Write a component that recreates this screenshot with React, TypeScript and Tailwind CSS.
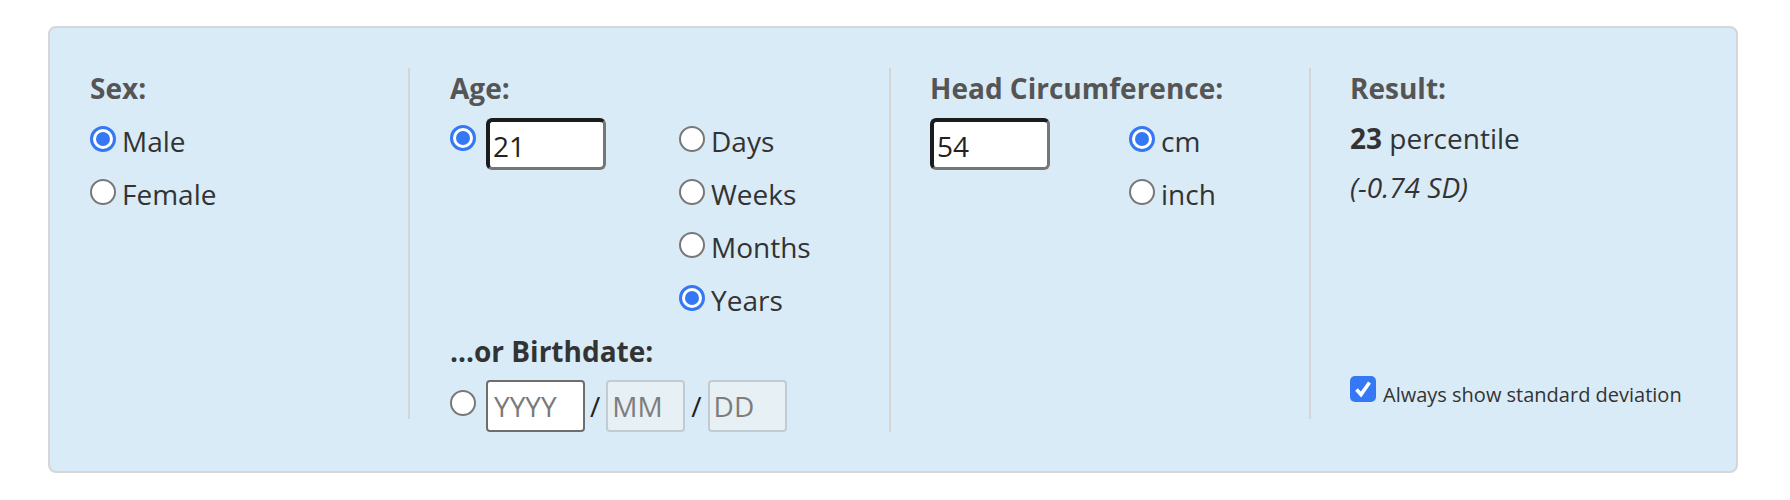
import { useState } from 'react';

type RadioProps = { checked?: boolean };

const Radio = ({ checked }: RadioProps) =>
    checked ? (
        <span className="flex h-[26px] w-[26px] shrink-0 items-center justify-center rounded-full border-[3px] border-[#3478f6] bg-white">
            <span className="h-[14px] w-[14px] rounded-full bg-[#3478f6]" />
        </span>
    ) : (
        <span className="block h-[26px] w-[26px] shrink-0 rounded-full border-2 border-[#787878] bg-white" />
    );

// radio sits on the text baseline, like a native inline radio
const Option = ({ label, checked }: { label: string; checked?: boolean }) => (
    <label className="flex h-[53px] items-start gap-[6px]">
        <span className="mt-[14px]">
            <Radio checked={checked} />
        </span>
        <span className="mt-[10px] leading-[38px]">{label}</span>
    </label>
);

// number box with the dark "focused" edge on top/left
const NumberBox = ({ value }: { value: string }) => (
    <input
        type="text"
        defaultValue={value}
        className="mt-[6px] h-[52px] w-[120px] rounded-[6px] border-t-4 border-l-4 border-r-[3px] border-b-[3px] border-t-[#1c1c1c] border-l-[#1c1c1c] border-r-[#767676] border-b-[#767676] bg-white pl-[3px] pt-[2px] text-[#222] outline-none"
    />
);

const Divider = ({ height }: { height: string }) => (
    <div className={`w-[2px] shrink-0 bg-[#d5d5d5] ${height}`} />
);

const Heading = ({ children }: { children: React.ReactNode }) => (
    <div className="font-bold leading-[38px] text-[#555]">{children}</div>
);

export default function App() {
    const [showSd, setShowSd] = useState(true);

    return (
        <div className="min-h-[500px] bg-white pt-[26px] pl-[48px] font-['Open_Sans',sans-serif] text-[28px] text-[#333]">
            <div className="flex w-[1690px] items-start rounded-[8px] border-2 border-[#d6d6d6] bg-[#d9ebf7] pt-[40px] pb-[39px]">
                {/* sex */}
                <div className="w-[358px] shrink-0 pl-[40px] pt-[1px]">
                    <Heading>Sex:</Heading>
                    <div className="mt-[5px]">
                        <Option label="Male" checked />
                        <Option label="Female" />
                    </div>
                </div>

                <Divider height="h-[351px]" />

                {/* age */}
                <div className="w-[479px] shrink-0 pl-[40px] pt-[1px]">
                    <Heading>Age:</Heading>
                    <div className="mt-[5px] flex">
                        <div className="flex w-[229px] items-start gap-[10px]">
                            <span className="mt-[13px]">
                                <Radio checked />
                            </span>
                            <NumberBox value="21" />
                        </div>
                        <div>
                            <Option label="Days" />
                            <Option label="Weeks" />
                            <Option label="Months" />
                            <Option label="Years" checked />
                        </div>
                    </div>
                    <div className="mt-[8px] font-bold leading-[38px]">...or Birthdate:</div>
                    <div className="mt-[10px] flex items-start">
                        <span className="mt-[10px]">
                            <Radio />
                        </span>
                        <input
                            type="text"
                            placeholder="YYYY"
                            className="ml-[10px] h-[52px] w-[99px] rounded-[4px] border-2 border-[#6e6e6e] bg-white pl-[6px] outline-none placeholder:text-[#7a7a7a]"
                        />
                        <span className="pl-[5px] pr-[6px] leading-[52px] text-[#222]">/</span>
                        <input
                            type="text"
                            placeholder="MM"
                            disabled
                            className="h-[52px] w-[79px] rounded-[4px] border-2 border-[#c2cbd0] bg-[#e7f0f5] pl-[4px] placeholder:text-[#7d7d7d]"
                        />
                        <span className="pl-[6px] pr-[6px] leading-[52px] text-[#222]">/</span>
                        <input
                            type="text"
                            placeholder="DD"
                            disabled
                            className="h-[52px] w-[79px] rounded-[4px] border-2 border-[#c2cbd0] bg-[#e7f0f5] pl-[4px] placeholder:text-[#7d7d7d]"
                        />
                    </div>
                </div>

                <Divider height="h-[364px]" />

                {/* head circumference */}
                <div className="w-[418px] shrink-0 pl-[39px] pt-[1px]">
                    <Heading>Head Circumference:</Heading>
                    <div className="mt-[5px] flex">
                        <div className="w-[199px]">
                            <NumberBox value="54" />
                        </div>
                        <div>
                            <Option label="cm" checked />
                            <Option label="inch" />
                        </div>
                    </div>
                </div>

                <Divider height="h-[351px]" />

                {/* result */}
                <div className="flex h-[351px] flex-1 flex-col pl-[39px] pt-[1px] pb-[11px]">
                    <Heading>Result:</Heading>
                    <div className="mt-[12px] leading-[38px]">
                        <span className="font-bold">23</span> percentile
                    </div>
                    <div className="mt-[11px] italic leading-[38px]">(-0.74 SD)</div>
                    <label
                        className="mt-auto flex cursor-pointer items-start gap-[7px] text-[20px]"
                        onClick={() => setShowSd(!showSd)}
                    >
                        <span
                            className={`flex h-[26px] w-[26px] shrink-0 items-center justify-center rounded-[5px] ${
                                showSd ? 'bg-[#3478f6]' : 'border-2 border-[#787878] bg-white'
                            }`}
                        >
                            {showSd && (
                                <svg viewBox="0 0 26 26" className="h-[26px] w-[26px]">
                                    <path d="M6.5 13.5 L11 18.5 L19.5 6.5" fill="none" stroke="white" strokeWidth="3.6" />
                                </svg>
                            )}
                        </span>
                        <span className="mt-[5px] leading-[27px]">Always show standard deviation</span>
                    </label>
                </div>
            </div>
        </div>
    );
}
